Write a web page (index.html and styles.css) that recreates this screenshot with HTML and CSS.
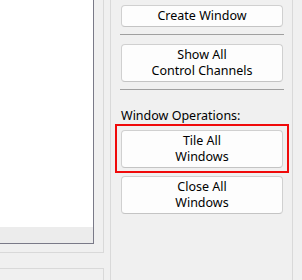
FILE: index.html
```html
<!DOCTYPE html>
<html lang="en">
<head>
    <meta charset="UTF-8">
    <meta name="viewport" content="width=device-width, initial-scale=1.0">
    <title>Window Manager</title>
    <link rel="stylesheet" href="styles.css">
</head>
<body>
    <div class="window">
        <div class="side">
            <div class="pane">
                <div class="view">
                    <div class="view-canvas"></div>
                    <div class="view-bar"></div>
                </div>
            </div>
            <div class="pane pane-lower"></div>
        </div>

        <div class="controls">
            <button type="button" class="btn btn-single">Create Window</button>
            <hr class="sep">
            <button type="button" class="btn">Show All<br>Control Channels</button>
            <hr class="sep">
            <div class="group-label">Window Operations:</div>
            <button type="button" class="btn highlighted">Tile All<br>Windows</button>
            <button type="button" class="btn btn-close">Close All<br>Windows</button>
        </div>
    </div>
</body>
</html>
```

FILE: styles.css
```css
body {
    margin: 0;
    padding: 0;
    background-color: #f0f0f0;
    font-family: "Segoe UI", "Noto Sans", sans-serif;
    font-size: 12.5px;
    color: #000;
}

.window {
    display: flex;
    height: 280px;
    overflow: hidden;
}

.side {
    width: 104px;
    display: flex;
    flex-direction: column;
    gap: 15px;
}

.pane {
    height: 253px;
    box-sizing: border-box;
    border-right: 1px solid #d9d9d9;
    border-bottom: 1px solid #d9d9d9;
}

.pane-lower {
    flex: 1;
    border-top: 1px solid #d9d9d9;
    border-bottom: none;
}

.view {
    width: 94px;
    height: 244px;
    box-sizing: border-box;
    border-right: 1px solid #7a7a88;
    border-bottom: 1px solid #7a7a88;
    display: flex;
    flex-direction: column;
}

.view-canvas {
    flex: 1;
    background-color: #ffffff;
}

.view-bar {
    height: 16px;
    background-color: #ececec;
}

.controls {
    margin-left: 6px;
    width: 183px;
    box-sizing: border-box;
    border-left: 1px solid #d9d9d9;
    border-right: 1px solid #d9d9d9;
    padding: 5px 9px 0 10px;
    display: flex;
    flex-direction: column;
}

.btn {
    font-family: inherit;
    font-size: 12.5px;
    line-height: 16px;
    color: #000;
    background-color: #fdfdfd;
    border: 1px solid #d0d0d0;
    border-bottom-color: #c4c4c4;
    border-radius: 4px;
    padding: 2px 4px;
    text-align: center;
    margin: 0;
}

.sep {
    border: none;
    height: 1px;
    background-color: #a0a0a0;
    margin: 7px -1px 9px;
}

.group-label {
    line-height: 16px;
    margin-top: 9px;
    margin-bottom: 6px;
}

.highlighted {
    position: relative;
}

.highlighted::after {
    content: "";
    position: absolute;
    left: -7px;
    top: -7px;
    right: -7px;
    bottom: -6px;
    border: 2px solid #f00a0a;
}

.btn-close {
    margin-top: 8px;
}
```
